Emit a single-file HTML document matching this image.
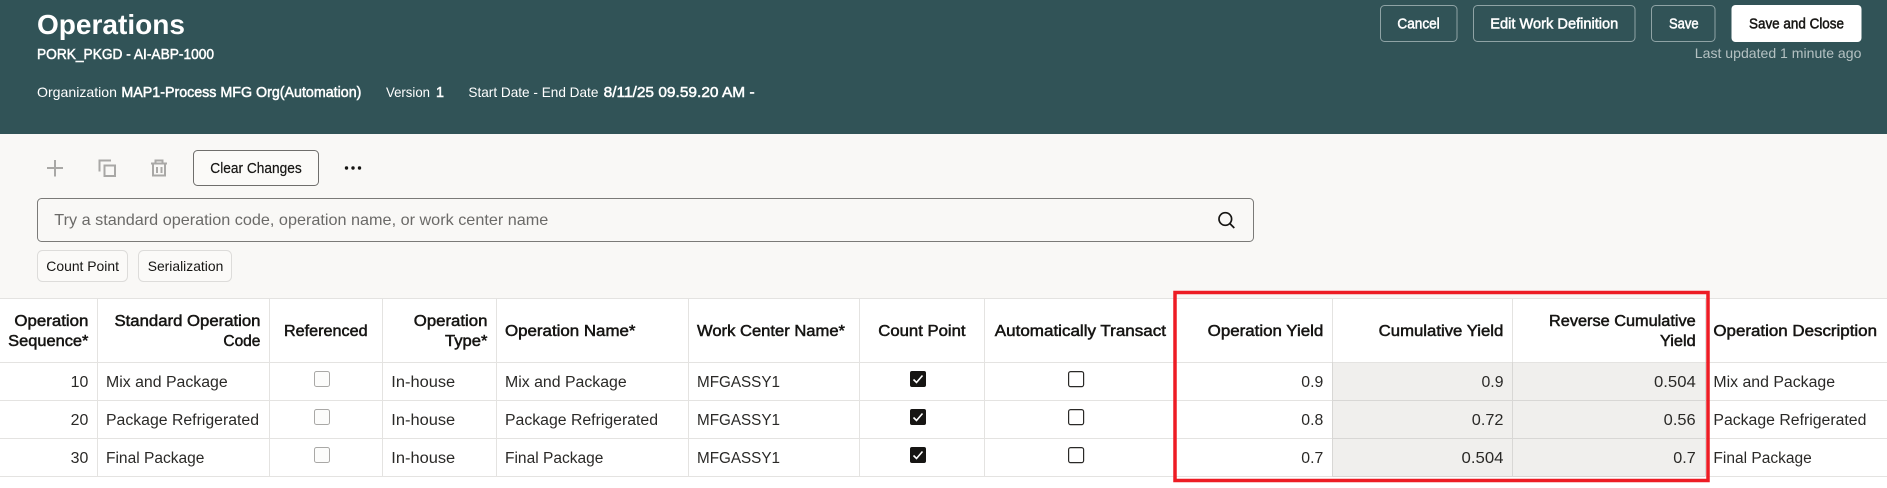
<!DOCTYPE html>
<html lang="en"><head><meta charset="utf-8"><title>Operations</title>
<style>
html,body{margin:0;padding:0;background:#fff;width:1887px;height:488px;overflow:hidden}
svg{display:block}
text{font-family:"Liberation Sans",Arial,sans-serif;font-size:15.5px;fill:#2a2927}
.h{font-size:15.5px;fill:#161513;stroke:#161513;stroke-width:.5px}
.w{fill:#fff;font-size:14px}
.wb{fill:#fff;font-size:14.5px;stroke:#fff;stroke-width:.5px}
.b{font-size:14.5px;fill:#fff;stroke:#fff;stroke-width:.5px}
.l{stroke:#e4e3e1;stroke-width:1;fill:none}
.g{stroke:#d8d7d5;stroke-width:1;fill:none}
.ic{stroke:#a9a8a6;stroke-width:2;fill:none}
</style></head><body>
<svg width="1887" height="488" viewBox="0 0 1887 488" xmlns="http://www.w3.org/2000/svg">
<rect width="1887" height="488" fill="#fff"/>
<rect y="134" width="1887" height="164" fill="#f9f8f6"/>
<rect width="1887" height="134" fill="#315357"/>

<text x="37" y="34" style="font-size:28px;font-weight:700;fill:#fff" textLength="148" lengthAdjust="spacingAndGlyphs">Operations</text>
<text x="37" y="59" class="wb" textLength="177" lengthAdjust="spacingAndGlyphs">PORK_PKGD - AI-ABP-1000</text>
<text x="37" y="97" class="w" textLength="80" lengthAdjust="spacingAndGlyphs">Organization</text>
<text x="121.4" y="97" class="wb" textLength="240" lengthAdjust="spacingAndGlyphs">MAP1-Process MFG Org(Automation)</text>
<text x="386" y="97" class="w" textLength="44" lengthAdjust="spacingAndGlyphs">Version</text>
<text x="436" y="97" class="wb" textLength="8" lengthAdjust="spacingAndGlyphs">1</text>
<text x="468.4" y="97" class="w" textLength="130" lengthAdjust="spacingAndGlyphs">Start Date - End Date</text>
<text x="603.6" y="97" class="wb" textLength="151" lengthAdjust="spacingAndGlyphs">8/11/25 09.59.20 AM -</text>

<g fill="none" stroke="#8fa3a5" stroke-width="1">
<rect x="1380.5" y="5.5" width="76.5" height="36" rx="4"/>
<rect x="1473.5" y="5.5" width="161.5" height="36" rx="4"/>
<rect x="1651.5" y="5.5" width="63.5" height="36" rx="4"/>
</g>
<rect x="1731.5" y="5" width="130" height="37" rx="4" fill="#fff"/>
<text x="1397.4" y="28.5" class="b" textLength="42.3" lengthAdjust="spacingAndGlyphs">Cancel</text>
<text x="1490.3" y="28.5" class="b" textLength="128" lengthAdjust="spacingAndGlyphs">Edit Work Definition</text>
<text x="1669" y="28.5" class="b" textLength="29.6" lengthAdjust="spacingAndGlyphs">Save</text>
<text x="1749" y="28.5" class="b" style="fill:#161513;stroke:#161513" textLength="95" lengthAdjust="spacingAndGlyphs">Save and Close</text>
<text x="1694.8" y="58" style="font-size:14px;fill:#b4c1c2" textLength="166.6" lengthAdjust="spacingAndGlyphs">Last updated 1 minute ago</text>

<path class="ic" d="M47 168H63M55 160V176.500"/>
<path class="ic" d="M99.500 171.500V160.500H111"/>
<rect class="ic" x="104.500" y="165.500" width="10.500" height="10.500"/>
<path class="ic" d="M151 163.500H167M155.500 163V160.500H162.500V163M153 163.500V175.500H165V163.500"/>
<path class="ic" d="M157 167V173M161.500 167V173"/>
<rect x="193.500" y="150.500" width="125" height="35" rx="4" fill="#fbfaf8" stroke="#6f6e6c"/>
<text x="210.300" y="173" style="font-size:14.5px;fill:#161513;stroke:#161513;stroke-width:.2px" textLength="91.400" lengthAdjust="spacingAndGlyphs">Clear Changes</text>
<circle cx="346.500" cy="168" r="1.700" fill="#161513"/><circle cx="353" cy="168" r="1.700" fill="#161513"/><circle cx="359.500" cy="168" r="1.700" fill="#161513"/>
<rect x="37.500" y="198.500" width="1216" height="43" rx="4" fill="#f9f8f6" stroke="#7b7a78"/>
<text x="54.300" y="225" style="font-size:16px;fill:#6b6a68" textLength="494" lengthAdjust="spacingAndGlyphs">Try a standard operation code, operation name, or work center name</text>
<circle cx="1225.300" cy="219" r="6.300" fill="none" stroke="#161513" stroke-width="1.700"/>
<path d="M1229.800 223.500L1234.300 228" stroke="#161513" stroke-width="1.700" fill="none"/>
<rect x="37.500" y="250.500" width="90" height="31" rx="5" fill="#fbfaf8" stroke="#dddcda"/>
<rect x="138.500" y="250.500" width="93" height="31" rx="5" fill="#fbfaf8" stroke="#dddcda"/>
<text x="46.300" y="271" style="font-size:14px;fill:#161513" textLength="72.700" lengthAdjust="spacingAndGlyphs">Count Point</text>
<text x="147.700" y="271" style="font-size:14px;fill:#161513" textLength="75.600" lengthAdjust="spacingAndGlyphs">Serialization</text>

<rect x="1332" y="362" width="373" height="114" fill="#f0efed"/>
<path class="l" d="M0 298.500H1887M0 362.500H1887M0 400.500H1887M0 438.500H1887M0 476.500H1887"/>
<path class="l" d="M97.500 298V476M269.500 298V476M382.500 298V476M496.500 298V476M688.500 298V476M859.500 298V476M984.500 298V476M1332.500 298V476M1512.500 298V476M1705.500 298V476"/>
<path class="g" d="M1332 400.500H1705M1332 438.500H1705M1332 476.500H1705M1332.500 362V476M1512.500 362V476M1705.500 362V476"/>

<text x="14.400" y="326" class="h" textLength="74" lengthAdjust="spacingAndGlyphs">Operation</text>
<text x="8.200" y="346" class="h" textLength="80.200" lengthAdjust="spacingAndGlyphs">Sequence*</text>
<text x="114.500" y="326" class="h" textLength="146" lengthAdjust="spacingAndGlyphs">Standard Operation</text>
<text x="223.400" y="346" class="h" textLength="37" lengthAdjust="spacingAndGlyphs">Code</text>
<text x="284" y="336" class="h" textLength="83.600" lengthAdjust="spacingAndGlyphs">Referenced</text>
<text x="413.800" y="326" class="h" textLength="73.600" lengthAdjust="spacingAndGlyphs">Operation</text>
<text x="445" y="346" class="h" textLength="42.400" lengthAdjust="spacingAndGlyphs">Type*</text>
<text x="505" y="336" class="h" textLength="130.500" lengthAdjust="spacingAndGlyphs">Operation Name*</text>
<text x="697" y="336" class="h" textLength="148" lengthAdjust="spacingAndGlyphs">Work Center Name*</text>
<text x="878.300" y="336" class="h" textLength="87.200" lengthAdjust="spacingAndGlyphs">Count Point</text>
<text x="994.800" y="336" class="h" textLength="171.200" lengthAdjust="spacingAndGlyphs">Automatically Transact</text>
<text x="1207.700" y="336" class="h" textLength="115.600" lengthAdjust="spacingAndGlyphs">Operation Yield</text>
<text x="1378.700" y="336" class="h" textLength="124.600" lengthAdjust="spacingAndGlyphs">Cumulative Yield</text>
<text x="1549" y="326" class="h" textLength="146.700" lengthAdjust="spacingAndGlyphs">Reverse Cumulative</text>
<text x="1660" y="346" class="h" textLength="35.700" lengthAdjust="spacingAndGlyphs">Yield</text>
<text x="1713.400" y="336" class="h" textLength="163.600" lengthAdjust="spacingAndGlyphs">Operation Description</text>

<g id="r1">
<text x="70.700" y="387" textLength="17.700" lengthAdjust="spacingAndGlyphs">10</text>
<text x="106" y="387" textLength="121.700" lengthAdjust="spacingAndGlyphs">Mix and Package</text>
<text x="391.300" y="387" textLength="63.900" lengthAdjust="spacingAndGlyphs">In-house</text>
<text x="505" y="387" textLength="121.700" lengthAdjust="spacingAndGlyphs">Mix and Package</text>
<text x="697" y="387" textLength="83" lengthAdjust="spacingAndGlyphs">MFGASSY1</text>
<text x="1301.300" y="387" textLength="22" lengthAdjust="spacingAndGlyphs">0.9</text>
<text x="1481.500" y="387" textLength="22" lengthAdjust="spacingAndGlyphs">0.9</text>
<text x="1654" y="387" textLength="41.800" lengthAdjust="spacingAndGlyphs">0.504</text>
<text x="1713.400" y="387" textLength="121.700" lengthAdjust="spacingAndGlyphs">Mix and Package</text>
</g>
<g id="r2">
<text x="70.700" y="425" textLength="17.700" lengthAdjust="spacingAndGlyphs">20</text>
<text x="106" y="425" textLength="153" lengthAdjust="spacingAndGlyphs">Package Refrigerated</text>
<text x="391.300" y="425" textLength="63.900" lengthAdjust="spacingAndGlyphs">In-house</text>
<text x="505" y="425" textLength="153" lengthAdjust="spacingAndGlyphs">Package Refrigerated</text>
<text x="697" y="425" textLength="83" lengthAdjust="spacingAndGlyphs">MFGASSY1</text>
<text x="1301.300" y="425" textLength="22" lengthAdjust="spacingAndGlyphs">0.8</text>
<text x="1471.800" y="425" textLength="31.700" lengthAdjust="spacingAndGlyphs">0.72</text>
<text x="1663.700" y="425" textLength="32" lengthAdjust="spacingAndGlyphs">0.56</text>
<text x="1713.400" y="425" textLength="153" lengthAdjust="spacingAndGlyphs">Package Refrigerated</text>
</g>
<g id="r3">
<text x="70.700" y="463" textLength="17.700" lengthAdjust="spacingAndGlyphs">30</text>
<text x="106" y="463" textLength="98.400" lengthAdjust="spacingAndGlyphs">Final Package</text>
<text x="391.300" y="463" textLength="63.900" lengthAdjust="spacingAndGlyphs">In-house</text>
<text x="505" y="463" textLength="98.400" lengthAdjust="spacingAndGlyphs">Final Package</text>
<text x="697" y="463" textLength="83" lengthAdjust="spacingAndGlyphs">MFGASSY1</text>
<text x="1301.300" y="463" textLength="22" lengthAdjust="spacingAndGlyphs">0.7</text>
<text x="1461.500" y="463" textLength="42" lengthAdjust="spacingAndGlyphs">0.504</text>
<text x="1673.300" y="463" textLength="22.500" lengthAdjust="spacingAndGlyphs">0.7</text>
<text x="1713.400" y="463" textLength="98.400" lengthAdjust="spacingAndGlyphs">Final Package</text>
</g>

<g fill="#fcfcfb" stroke="#a9a8a6" stroke-width="1">
<rect x="314.500" y="371.500" width="15" height="15" rx="2"/>
<rect x="314.500" y="409.500" width="15" height="15" rx="2"/>
<rect x="314.500" y="447.500" width="15" height="15" rx="2"/>
</g>
<g fill="#161513">
<rect x="910" y="371" width="16" height="16" rx="2"/>
<rect x="910" y="409" width="16" height="16" rx="2"/>
<rect x="910" y="447" width="16" height="16" rx="2"/>
</g>
<g fill="none" stroke="#fff" stroke-width="1.600">
<path d="M913.500 379.500L916.500 382.500L922.500 375.500"/>
<path d="M913.500 417.500L916.500 420.500L922.500 413.500"/>
<path d="M913.500 455.500L916.500 458.500L922.500 451.500"/>
</g>
<g fill="#fff" stroke="#2a2927" stroke-width="1.200">
<rect x="1068.600" y="371.600" width="15" height="15" rx="2"/>
<rect x="1068.600" y="409.600" width="15" height="15" rx="2"/>
<rect x="1068.600" y="447.600" width="15" height="15" rx="2"/>
</g>

<rect x="1175" y="292.500" width="533" height="188" fill="none" stroke="#ed1c24" stroke-width="3.500"/>
</svg>
</body></html>
